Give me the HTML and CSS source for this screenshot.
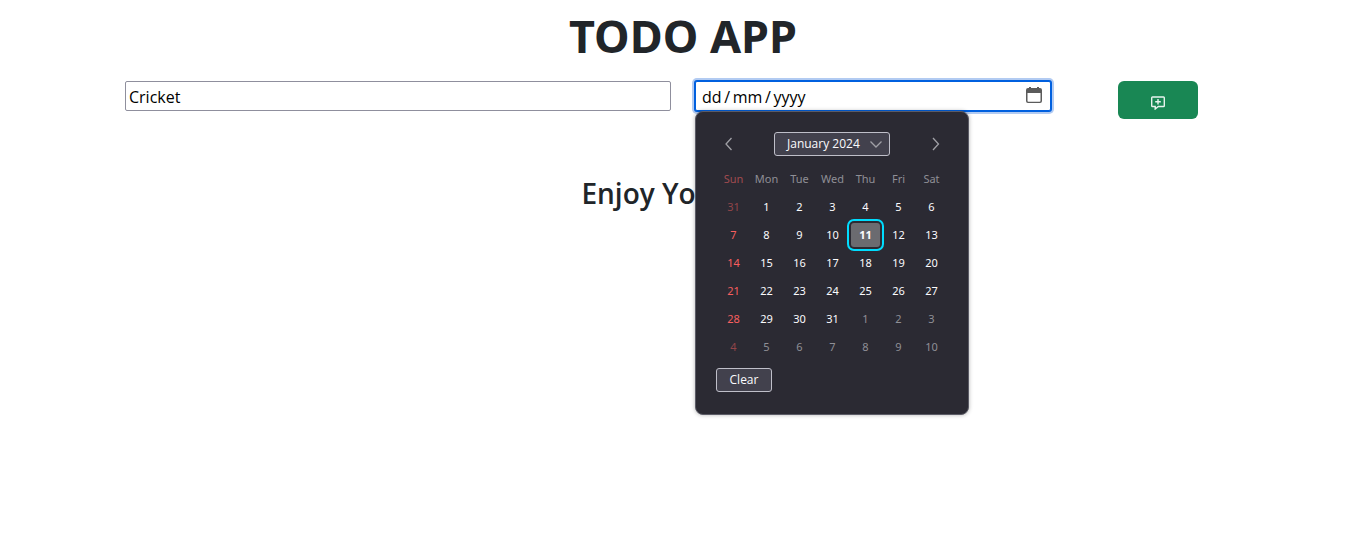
FILE: index.html
```html
<!DOCTYPE html>
<html lang="en">
<head>
<meta charset="utf-8">
<meta name="viewport" content="width=device-width, initial-scale=1">
<title>TODO APP</title>
<link rel="stylesheet" href="styles.css">
</head>
<body>
<main class="container">
  <h1 class="title">TODO APP</h1>
  <form class="row">
    <div class="col-6">
      <input class="field" type="text" value="Cricket" aria-label="Task">
    </div>
    <div class="col-4">
      <div class="date">
        <input class="field date-input" type="text" value="dd&#8201;/&#8201;mm&#8201;/&#8201;yyyy" aria-label="Due date">
        <svg class="date-icon" viewBox="0 0 16 16" aria-hidden="true"><path fill="#5b5b5b" fill-rule="evenodd" d="M3 0h2v1h6V0h2v1h1a2 2 0 0 1 2 2v11a2 2 0 0 1-2 2H2a2 2 0 0 1-2-2V3a2 2 0 0 1 2-2h1zM1.500 6v8a.8.8 0 0 0 .8.8h11.400a.8.8 0 0 0 .8-.8V6z"/></svg>
        <div class="picker">
          <div class="picker-head">
            <button class="arrow" type="button" aria-label="Previous month"><svg viewBox="0 0 14 14"><path d="M10.500 1 5 7l5.500 6"/></svg></button>
            <button class="month" type="button">January 2024<svg viewBox="0 0 14 14"><path d="m1.500 4.500 5.500 5.500 5.500-5.500"/></svg></button>
            <button class="arrow" type="button" aria-label="Next month"><svg viewBox="0 0 14 14"><path d="m4 1 5.500 6-5.500 6"/></svg></button>
          </div>
          <table class="days">
            <thead><tr><th>Sun</th><th>Mon</th><th>Tue</th><th>Wed</th><th>Thu</th><th>Fri</th><th>Sat</th></tr></thead>
            <tbody>
              <tr><td class="out">31</td><td>1</td><td>2</td><td>3</td><td>4</td><td>5</td><td>6</td></tr>
              <tr><td>7</td><td>8</td><td>9</td><td>10</td><td><span class="today">11</span></td><td>12</td><td>13</td></tr>
              <tr><td>14</td><td>15</td><td>16</td><td>17</td><td>18</td><td>19</td><td>20</td></tr>
              <tr><td>21</td><td>22</td><td>23</td><td>24</td><td>25</td><td>26</td><td>27</td></tr>
              <tr><td>28</td><td>29</td><td>30</td><td>31</td><td class="out">1</td><td class="out">2</td><td class="out">3</td></tr>
              <tr><td class="out">4</td><td class="out">5</td><td class="out">6</td><td class="out">7</td><td class="out">8</td><td class="out">9</td><td class="out">10</td></tr>
            </tbody>
          </table>
          <button class="clear" type="button">Clear</button>
        </div>
      </div>
    </div>
    <div class="col-2">
      <button class="add" type="button" aria-label="Add task"><svg viewBox="0 0 14 14"><path d="M1.500 1h11a.8.8 0 0 1 .8.8v7.900a.8.8 0 0 1-.8.8H7.300L4.200 13v-2.500H1.500a.8.8 0 0 1-.8-.8V1.800a.8.8 0 0 1 .8-.8zM7 3v5.500M4.200 5.750h5.600"/></svg></button>
    </div>
  </form>
  <h2 class="message">Enjoy Your Day</h2>
</main>
</body>
</html>
```
FILE: styles.css
```css
* { box-sizing: border-box; }
body {
  margin: 0;
  min-height: 100vh;
  background: #fff;
  color: #212529;
  font: 16px/24px "Noto Sans", "Open Sans", sans-serif;
}
button, input { font: inherit; margin: 0; }
.container {
  max-width: 1140px;
  margin: 0 auto;
  padding: 9px 0 0;
  text-align: center;
}
.title {
  margin: 0 0 18px;
  font-size: 45px;
  line-height: 54px;
  font-weight: 700;
}
.row { display: grid; grid-template-columns: 6fr 4fr 2fr; }
.col-6, .col-4, .col-2 { padding: 0 12px; }
.field {
  display: block;
  width: 100%;
  height: 30px;
  padding: 2px 3px 0;
  border: 1px solid #8f8f9d;
  border-radius: 2px;
  background: #fff;
  color: #000;
  font-family: "Open Sans", sans-serif;
}
.date { position: relative; }
.date-input {
  padding-left: 6px;
  border-color: #0060df;
  outline: none;
  box-shadow: 0 0 0 1px #0060df, 0 0 0 3px #b2cbf2;
}
.date-icon { position: absolute; top: 6px; right: 9px; width: 16px; height: 16px; }
.picker {
  position: absolute;
  top: 30px;
  left: 0;
  width: 274px;
  padding: 20px 20px 22px;
  border: 1px solid #5b5b66;
  border-radius: 8px;
  background: #2b2a33;
  color: #fbfbfe;
  box-shadow: 0 0 4px rgba(0, 0, 0, 0.3);
  text-align: left;
}
.picker-head { display: flex; justify-content: space-between; align-items: center; margin-bottom: 9px; }
.picker svg { width: 14px; height: 14px; fill: none; stroke: #a0a0a6; stroke-width: 1.3; }
.arrow {
  display: flex;
  align-items: center;
  justify-content: center;
  width: 24px;
  height: 24px;
  padding: 0;
  border: 0;
  background: none;
}
.month, .clear {
  height: 24px;
  border: 1px solid #bfbfc9;
  border-radius: 3px;
  background: #42414d;
  color: #fbfbfe;
  font-family: "Open Sans", sans-serif;
  font-size: 12px;
  line-height: 20px;
}
.month {
  display: flex;
  align-items: center;
  justify-content: space-between;
  width: 116px;
  padding: 0 6px 0 12px;
  white-space: nowrap;
}
.days {
  width: 231px;
  margin-left: 1px;
  table-layout: fixed;
  border-collapse: collapse;
  font-size: 11px;
  line-height: 16px;
  text-align: center;
}
.days th, .days td { height: 28px; padding: 0; }
.days th { color: #8f8f96; font-weight: 400; }
.days td:first-child { color: #f75f5f; }
.days th:first-child { color: #a04a50; }
.days .out { color: #8f8f96; }
.days .out:first-child { color: #914549; }
.today {
  display: block;
  height: 24px;
  margin: 0 2px;
  border-radius: 3px;
  background: #6b6b70;
  font-weight: 700;
  line-height: 24px;
  box-shadow: 0 0 0 2px #2b2a33, 0 0 0 4px #00ddff;
}
.clear { display: block; width: 56px; margin-top: 7px; padding: 0; }
.add {
  display: inline-flex;
  align-items: center;
  justify-content: center;
  width: 80px;
  height: 38px;
  padding: 5px 0 0;
  border: 0;
  border-radius: 6px;
  background: #198754;
}
.add svg { width: 14px; height: 14px; fill: none; stroke: #e8f3ee; stroke-width: 1.4; }
.message {
  margin: 57px 0 0;
  font-family: "Open Sans", sans-serif;
  font-size: 28px;
  line-height: 34px;
  font-weight: 600;
}
```
